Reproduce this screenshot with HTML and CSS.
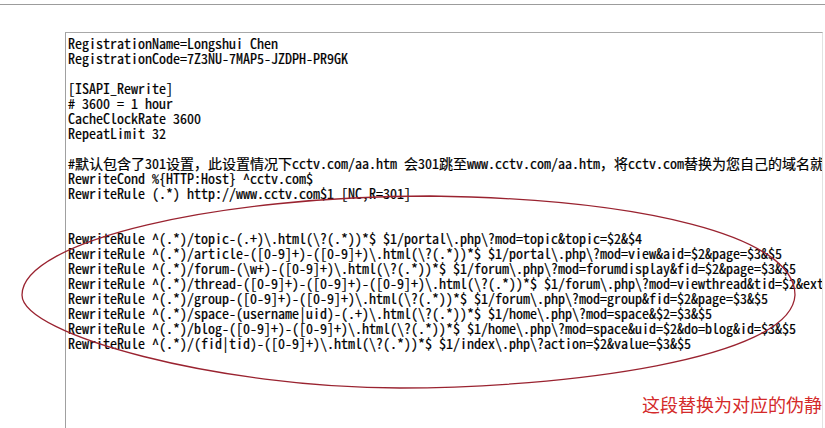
FILE: index.html
```html
<!DOCTYPE html>
<html lang="zh-CN">
<head>
    <meta charset="UTF-8">
    <meta name="viewport" content="width=device-width, initial-scale=1.0">
    <title>ISAPI_Rewrite httpd.ini</title>
    <link rel="stylesheet" href="styles.css">
</head>
<body>
    <div class="top-rule"></div>

    <div class="editor">
<pre class="code">RegistrationName=Longshui Chen
RegistrationCode=7Z3NU-7MAP5-JZDPH-PR9GK

[ISAPI_Rewrite]
# 3600 = 1 hour
CacheClockRate 3600
RepeatLimit 32

#默认包含了301设置，此设置情况下cctv.com/aa.htm 会301跳至www.cctv.com/aa.htm，将cctv.com替换为您自己的域名就
RewriteCond %{HTTP:Host} ^cctv.com$
RewriteRule (.*) http://www.cctv.com$1 [NC,R=301]


RewriteRule ^(.*)/topic-(.+)\.html(\?(.*))*$ $1/portal\.php\?mod=topic&amp;topic=$2&amp;$4
RewriteRule ^(.*)/article-([0-9]+)-([0-9]+)\.html(\?(.*))*$ $1/portal\.php\?mod=view&amp;aid=$2&amp;page=$3&amp;$5
RewriteRule ^(.*)/forum-(\w+)-([0-9]+)\.html(\?(.*))*$ $1/forum\.php\?mod=forumdisplay&amp;fid=$2&amp;page=$3&amp;$5
RewriteRule ^(.*)/thread-([0-9]+)-([0-9]+)-([0-9]+)\.html(\?(.*))*$ $1/forum\.php\?mod=viewthread&amp;tid=$2&amp;ext
RewriteRule ^(.*)/group-([0-9]+)-([0-9]+)\.html(\?(.*))*$ $1/forum\.php\?mod=group&amp;fid=$2&amp;page=$3&amp;$5
RewriteRule ^(.*)/space-(username|uid)-(.+)\.html(\?(.*))*$ $1/home\.php\?mod=space&amp;$2=$3&amp;$5
RewriteRule ^(.*)/blog-([0-9]+)-([0-9]+)\.html(\?(.*))*$ $1/home\.php\?mod=space&amp;uid=$2&amp;do=blog&amp;id=$3&amp;$5
RewriteRule ^(.*)/(fid|tid)-([0-9]+)\.html(\?(.*))*$ $1/index\.php\?action=$2&amp;value=$3&amp;$5</pre>

        <div class="note">这段替换为对应的伪静</div>
    </div>

    <!-- 红色圈注 -->
    <svg class="circle-mark" width="825" height="428" viewBox="0 0 825 428">
        <path d="M430 196 C640 199 795 235 795 295 C792 360 560 388 400 388 C220 388 22 335 22 295 C22 240 220 196 430 196 Z"
              fill="none" stroke="#9a2330" stroke-width="1.3"/>
    </svg>
</body>
</html>
```

FILE: styles.css
```css
html, body {
    margin: 0;
    padding: 0;
    background-color: #fff;
    overflow: hidden;
}
body {
    width: 825px;
    height: 428px;
}
.top-rule {
    margin-top: 4px;
    border-top: 1px solid #9c9c9c;
}
.editor {
    box-sizing: border-box;
    width: 758px;
    height: 400px;
    margin: 27px 0 0 65px;
    padding: 3px 0 0 2px;
    border-top: 1px solid #a8a8a8;
    border-left: 1px solid #a0a0a0;
    border-right: 1px solid #e2e2e2;
    overflow: hidden;
}
.code {
    margin: 0;
    font-family: "Noto Sans Mono CJK SC", "Noto Sans CJK SC", monospace;
    font-size: 14px;
    line-height: 15px;
    color: #000;
    -webkit-text-stroke: 0.2px #000;
    white-space: pre;
}
.note {
    margin: 41px 0 0 574px;
    font-family: "Noto Sans CJK SC", sans-serif;
    font-size: 18px;
    line-height: 24px;
    color: #d42a2a;
    white-space: nowrap;
}
.circle-mark {
    position: absolute;
    top: 0;
    left: 0;
    pointer-events: none;
}
```
